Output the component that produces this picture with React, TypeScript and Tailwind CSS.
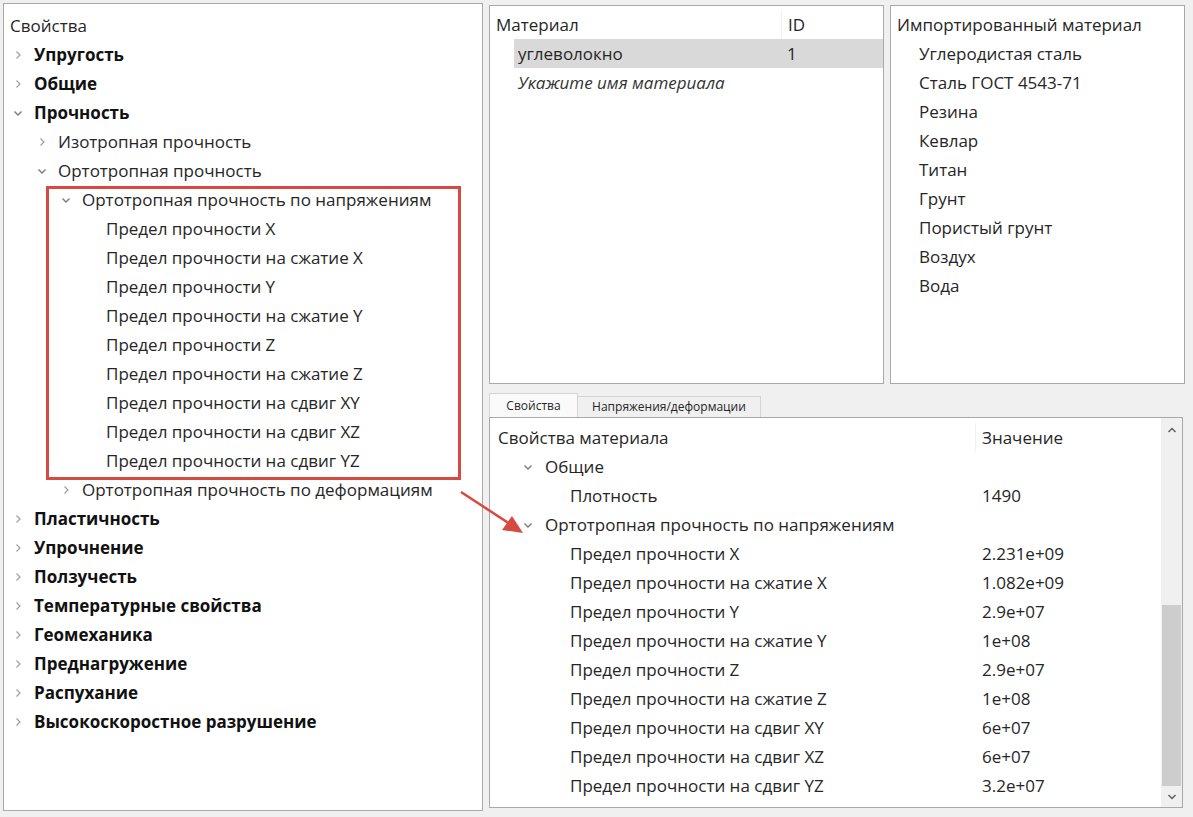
import type { ReactNode } from 'react';

type Node = { label: string; level: number; bold?: boolean; open?: boolean; leaf?: boolean };

const tree: Node[] = [
  { label: 'Упругость', level: 0, bold: true },
  { label: 'Общие', level: 0, bold: true },
  { label: 'Прочность', level: 0, bold: true, open: true },
  { label: 'Изотропная прочность', level: 1 },
  { label: 'Ортотропная прочность', level: 1, open: true },
  { label: 'Ортотропная прочность по напряжениям', level: 2, open: true },
  { label: 'Предел прочности X', level: 3, leaf: true },
  { label: 'Предел прочности на сжатие X', level: 3, leaf: true },
  { label: 'Предел прочности Y', level: 3, leaf: true },
  { label: 'Предел прочности на сжатие Y', level: 3, leaf: true },
  { label: 'Предел прочности Z', level: 3, leaf: true },
  { label: 'Предел прочности на сжатие Z', level: 3, leaf: true },
  { label: 'Предел прочности на сдвиг XY', level: 3, leaf: true },
  { label: 'Предел прочности на сдвиг XZ', level: 3, leaf: true },
  { label: 'Предел прочности на сдвиг YZ', level: 3, leaf: true },
  { label: 'Ортотропная прочность по деформациям', level: 2 },
  { label: 'Пластичность', level: 0, bold: true },
  { label: 'Упрочнение', level: 0, bold: true },
  { label: 'Ползучесть', level: 0, bold: true },
  { label: 'Температурные свойства', level: 0, bold: true },
  { label: 'Геомеханика', level: 0, bold: true },
  { label: 'Преднагружение', level: 0, bold: true },
  { label: 'Распухание', level: 0, bold: true },
  { label: 'Высокоскоростное разрушение', level: 0, bold: true },
];

const imported = [
  'Углеродистая сталь',
  'Сталь ГОСТ 4543-71',
  'Резина',
  'Кевлар',
  'Титан',
  'Грунт',
  'Пористый грунт',
  'Воздух',
  'Вода',
];

const values: [string, string][] = [
  ['Предел прочности X', '2.231e+09'],
  ['Предел прочности на сжатие X', '1.082e+09'],
  ['Предел прочности Y', '2.9e+07'],
  ['Предел прочности на сжатие Y', '1e+08'],
  ['Предел прочности Z', '2.9e+07'],
  ['Предел прочности на сжатие Z', '1e+08'],
  ['Предел прочности на сдвиг XY', '6e+07'],
  ['Предел прочности на сдвиг XZ', '6e+07'],
  ['Предел прочности на сдвиг YZ', '3.2e+07'],
];

const Chevron = ({ open }: { open?: boolean }) => (
  <svg width="10" height="10" viewBox="0 0 10 10" className="shrink-0">
    {open ? (
      <polyline points="1.5,3.5 5,7 8.5,3.5" fill="none" stroke="#7a7a7a" strokeWidth="1.4" />
    ) : (
      <polyline points="3.5,1.5 7,5 3.5,8.5" fill="none" stroke="#a0a0a0" strokeWidth="1.2" />
    )}
  </svg>
);

const Row = ({ children, className = '' }: { children: ReactNode; className?: string }) => (
  <div className={`h-[29px] flex items-center whitespace-nowrap ${className}`}>{children}</div>
);

const indent = ['pl-[9px]', 'pl-[33px]', 'pl-[57px]', 'pl-[81px]'];

export default function App() {
  return (
    <div
      className="relative w-[1193px] h-[817px] bg-[#f0f0f0] flex gap-[6px] pl-[3px] pt-[3px] text-[17px] text-[#262626] overflow-hidden"
      style={{ fontFamily: '"Open Sans", "Noto Sans", sans-serif' }}
    >
      {/* property tree */}
      <div className="w-[480px] h-[808px] bg-white border border-[#a9a9a9] pt-[7px]">
        <Row className="pl-[6px]">Свойства</Row>
        {tree.map((n, i) => (
          <Row key={i} className={indent[n.level]}>
            <span className="w-[21px] flex justify-start">{!n.leaf && <Chevron open={n.open} />}</span>
            <span className={n.bold ? 'font-bold text-[#111]' : ''}>{n.label}</span>
          </Row>
        ))}
      </div>

      <div className="w-[697px] flex flex-col pt-[2px]">
        <div className="flex gap-[6px] h-[379px]">
          {/* materials */}
          <div className="w-[395px] bg-white border border-[#a9a9a9] pt-[4px]">
            <Row className="pl-[6px]">
              <span className="w-[285px]">Материал</span>
              <span className="h-full w-px bg-[#f0f0f0]" />
              <span className="pl-[6px]">ID</span>
            </Row>
            <Row className="ml-[24px] bg-[#d9d9d9] pl-[4px]">
              <span className="w-[262px]">углеволокно</span>
              <span className="pl-[7px]">1</span>
            </Row>
            <Row className="pl-[28px] italic text-[#333]">Укажите имя материала</Row>
          </div>

          {/* imported */}
          <div className="w-[295px] bg-white border border-[#a9a9a9] pt-[4px]">
            <Row className="pl-[6px]">Импортированный материал</Row>
            {imported.map((m) => (
              <Row key={m} className="pl-[28px]">
                {m}
              </Row>
            ))}
          </div>
        </div>

        {/* tabs */}
        <div className="flex items-end h-[33px] text-[12px]">
          <div className="h-[24px] w-[89px] bg-[#fafafa] border border-b-0 border-[#d4d4d4] flex items-center justify-center">
            Свойства
          </div>
          <div className="h-[21px] w-[183px] bg-[#f0f0f0] border border-l-0 border-b-0 border-[#d4d4d4] flex items-center justify-center">
            Напряжения/деформации
          </div>
        </div>

        {/* material properties */}
        <div className="w-[694px] h-[391px] bg-white border border-[#a9a9a9] flex">
          <div className="flex-1 pt-[5px]">
            <Row className="pl-[8px]">
              <span className="w-[477px]">Свойства материала</span>
              <span className="h-full w-px bg-[#f0f0f0]" />
              <span className="pl-[6px]">Значение</span>
            </Row>
            <Row className="pl-[33px]">
              <span className="w-[22px]"><Chevron open /></span>
              Общие
            </Row>
            <Row className="pl-[80px]">
              <span className="w-[412px]">Плотность</span>
              1490
            </Row>
            <Row className="pl-[33px]">
              <span className="w-[22px]"><Chevron open /></span>
              Ортотропная прочность по напряжениям
            </Row>
            {values.map(([k, v]) => (
              <Row key={k} className="pl-[80px]">
                <span className="w-[412px]">{k}</span>
                {v}
              </Row>
            ))}
          </div>

          {/* scrollbar */}
          <div className="w-[21px] bg-[#f0f0f0] flex flex-col">
            <div className="h-[24px] flex items-center justify-center">
              <svg width="10" height="8" viewBox="0 0 10 8">
                <polyline points="1.5,6 5,2.5 8.5,6" fill="none" stroke="#606060" strokeWidth="1.5" />
              </svg>
            </div>
            <div className="h-[163px]" />
            <div className="mx-[1px] h-[181px] bg-[#cdcdcd]" />
            <div className="flex-1 flex items-center justify-center">
              <svg width="10" height="8" viewBox="0 0 10 8">
                <polyline points="1.5,2 5,5.5 8.5,2" fill="none" stroke="#606060" strokeWidth="1.5" />
              </svg>
            </div>
          </div>
        </div>
      </div>

      {/* callout box and arrow drawn over the panels */}
      <div className="absolute left-[46px] top-[186px] w-[415px] h-[294px] border-[3px] border-[#d64a40] pointer-events-none" />
      <svg className="absolute left-0 top-0 pointer-events-none" width="1193" height="817">
        <line x1="461" y1="492" x2="510" y2="524" stroke="#d64a40" strokeWidth="2.5" />
        <polygon points="523,533 502,530 512,516" fill="#d64a40" />
      </svg>
    </div>
  );
}
